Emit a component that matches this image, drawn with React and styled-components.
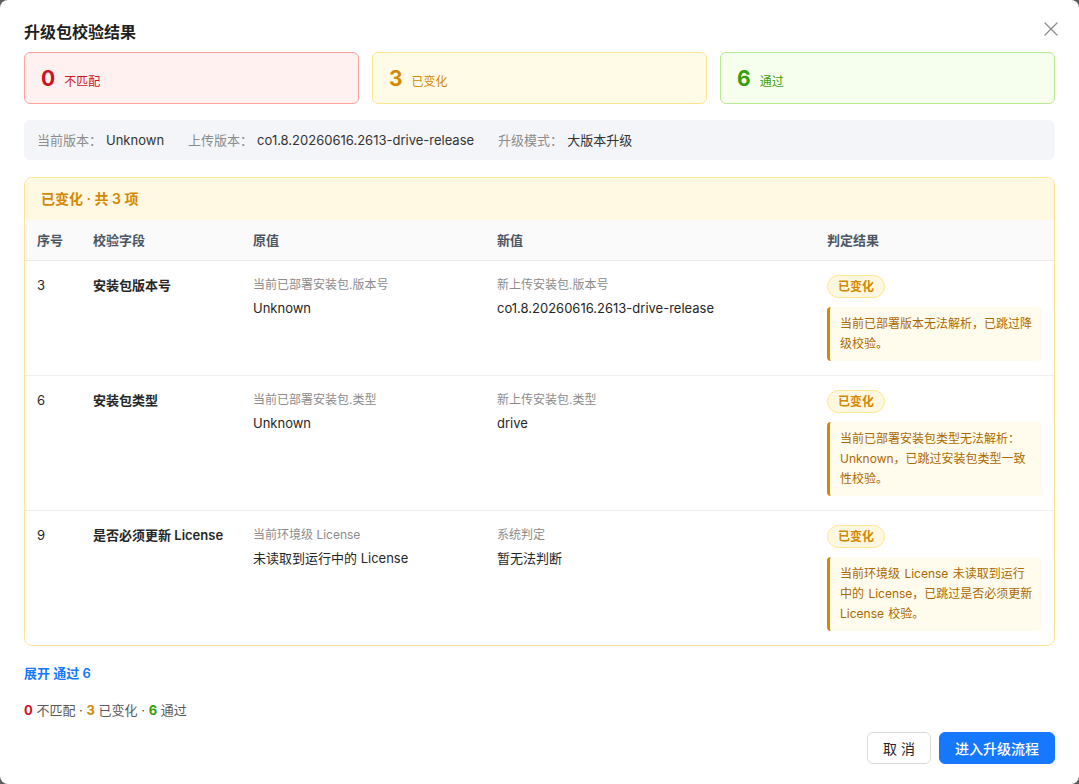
import React from "react";
import styled, { createGlobalStyle } from "styled-components";

const GlobalStyle = createGlobalStyle`
  html, body {
    margin: 0;
    padding: 0;
    background: #5c5c5c;
  }
  body {
    font-family: Inter, "Noto Sans CJK SC", "Noto Sans", sans-serif;
    color: #262626;
    -webkit-font-smoothing: antialiased;
  }
  * { box-sizing: border-box; }
`;

const Modal = styled.div`
  width: 1079px;
  height: 784px;
  background: #fff;
  border-radius: 8px;
  padding: 20px 24px 20px;
  display: flex;
  flex-direction: column;
  position: relative;
`;

const Title = styled.h2`
  margin: 0;
  font-size: 16px;
  line-height: 24px;
  font-weight: 600;
  color: #1f1f1f;
`;

const CloseBtn = styled.button`
  position: absolute;
  top: 21px;
  right: 20px;
  width: 16px;
  height: 16px;
  padding: 0;
  border: none;
  background: transparent;
  display: flex;
  align-items: center;
  justify-content: center;
`;

const StatRow = styled.div`
  display: grid;
  grid-template-columns: repeat(3, 1fr);
  gap: 13px;
  margin-top: 8px;
`;

const tones = {
  red: { bg: "#fff1f0", border: "#ffa39e", color: "#cf1322" },
  yellow: { bg: "#fffbe6", border: "#ffe58f", color: "#d48806" },
  green: { bg: "#f6ffed", border: "#b7eb8f", color: "#389e0d" },
};

const StatCard = styled.div`
  height: 52px;
  border-radius: 6px;
  border: 1px solid ${(p) => tones[p.$tone].border};
  background: ${(p) => tones[p.$tone].bg};
  color: ${(p) => tones[p.$tone].color};
  display: flex;
  align-items: baseline;
  padding: 12px 16px 0;
  gap: 9px;
`;

const StatNum = styled.span`
  font-size: 21px;
  line-height: 28px;
  font-weight: 700;
`;

const StatLabel = styled.span`
  font-size: 12px;
`;

const InfoBar = styled.div`
  margin-top: 16px;
  height: 40px;
  background: #f4f5f8;
  border-radius: 6px;
  display: flex;
  align-items: center;
  padding: 0 13px;
  gap: 24px;
  font-size: 13px;
  line-height: 20px;
`;

const InfoItem = styled.div`
  display: flex;
  align-items: baseline;
  gap: 4px;
`;

const InfoLabel = styled.span`
  color: #8c8c8c;
`;

const InfoValue = styled.span`
  color: #333;
`;

const Section = styled.div`
  margin-top: 17px;
  border: 1px solid #ffe58f;
  border-radius: 8px;
  overflow: hidden;
`;

const SectionHead = styled.div`
  background: #fff8e2;
  padding: 11px 16px;
  font-size: 14px;
  line-height: 20px;
  font-weight: 600;
  color: #d48806;
`;

const cols = "56px 160px 244px 330px 1fr";

const HeadRow = styled.div`
  display: grid;
  grid-template-columns: ${cols};
  background: #fafafa;
  border-bottom: 1px solid #ebebeb;
`;

const HeadCell = styled.div`
  padding: 10px 12px;
  font-size: 13px;
  line-height: 20px;
  font-weight: 600;
  color: #4b5563;
`;

const Row = styled.div`
  display: grid;
  grid-template-columns: ${cols};
  border-top: ${(p) => (p.$first ? "none" : "1px solid #f0f0f0")};
`;

const Cell = styled.div`
  padding: 14px 12px 14px;
  font-size: 13px;
  line-height: 20px;
  color: #262626;
  font-weight: ${(p) => (p.$bold ? 600 : 400)};
`;

const SubLabel = styled.div`
  font-size: 12px;
  line-height: 20px;
  color: #8c8c8c;
`;

const Value = styled.div`
  margin-top: 3px;
  font-size: 13px;
  line-height: 20px;
  color: #262626;
`;

const Tag = styled.span`
  display: inline-flex;
  align-items: center;
  height: 23px;
  padding: 0 10px;
  border-radius: 12px;
  border: 1px solid #ffe58f;
  background: #fff8e1;
  color: #d48806;
  font-size: 12px;
  font-weight: 600;
`;

const Note = styled.div`
  margin-top: 9px;
  background: #fffcee;
  border-left: 3px solid #d48806;
  border-radius: 4px;
  padding: 7px 7px 7px 10px;
  font-size: 12px;
  line-height: 20px;
  word-spacing: 1px;
  color: #ad6800;
`;

const ExpandLink = styled.a`
  margin-top: 17px;
  font-size: 13px;
  line-height: 20px;
  font-weight: 600;
  color: #1677ff;
  cursor: pointer;
`;

const Summary = styled.div`
  margin-top: 17px;
  font-size: 13px;
  line-height: 20px;
  color: #595959;
`;

const Count = styled.b`
  color: ${(p) => tones[p.$tone].color};
  font-weight: 700;
`;

const Footer = styled.div`
  margin-top: auto;
  display: flex;
  justify-content: flex-end;
  gap: 8px;
`;

const Button = styled.button`
  height: 32px;
  padding: 0 15px;
  border-radius: 6px;
  font-family: inherit;
  font-size: 14px;
  border: 1px solid ${(p) => (p.$primary ? "#1677ff" : "#d9d9d9")};
  background: ${(p) => (p.$primary ? "#1677ff" : "#fff")};
  color: ${(p) => (p.$primary ? "#fff" : "#262626")};
  font-weight: ${(p) => (p.$primary ? 500 : 400)};
  cursor: pointer;
`;

const rows = [
  {
    no: 3,
    field: "安装包版本号",
    oldLabel: "当前已部署安装包.版本号",
    oldVal: "Unknown",
    newLabel: "新上传安装包.版本号",
    newVal: "co1.8.20260616.2613-drive-release",
    note: "当前已部署版本无法解析，已跳过降级校验。",
  },
  {
    no: 6,
    field: "安装包类型",
    oldLabel: "当前已部署安装包.类型",
    oldVal: "Unknown",
    newLabel: "新上传安装包.类型",
    newVal: "drive",
    note: "当前已部署安装包类型无法解析：Unknown，已跳过安装包类型一致性校验。",
  },
  {
    no: 9,
    field: "是否必须更新 License",
    oldLabel: "当前环境级 License",
    oldVal: "未读取到运行中的 License",
    newLabel: "系统判定",
    newVal: "暂无法判断",
    note: "当前环境级 License 未读取到运行中的 License，已跳过是否必须更新 License 校验。",
  },
];

export default function App() {
  return (
    <>
      <GlobalStyle />
      <Modal>
        <Title>升级包校验结果</Title>
        <CloseBtn aria-label="close">
          <svg width="14" height="14" viewBox="0 0 14 14">
            <path d="M1 1L13 13M13 1L1 13" stroke="#8c8c8c" strokeWidth="1.3" strokeLinecap="round" />
          </svg>
        </CloseBtn>
        <StatRow>
          <StatCard $tone="red">
            <StatNum>0</StatNum>
            <StatLabel>不匹配</StatLabel>
          </StatCard>
          <StatCard $tone="yellow">
            <StatNum>3</StatNum>
            <StatLabel>已变化</StatLabel>
          </StatCard>
          <StatCard $tone="green">
            <StatNum>6</StatNum>
            <StatLabel>通过</StatLabel>
          </StatCard>
        </StatRow>
        <InfoBar>
          <InfoItem>
            <InfoLabel>当前版本：</InfoLabel>
            <InfoValue>Unknown</InfoValue>
          </InfoItem>
          <InfoItem>
            <InfoLabel>上传版本：</InfoLabel>
            <InfoValue>co1.8.20260616.2613-drive-release</InfoValue>
          </InfoItem>
          <InfoItem>
            <InfoLabel>升级模式：</InfoLabel>
            <InfoValue>大版本升级</InfoValue>
          </InfoItem>
        </InfoBar>
        <Section>
          <SectionHead>已变化 · 共 3 项</SectionHead>
          <HeadRow>
            <HeadCell>序号</HeadCell>
            <HeadCell>校验字段</HeadCell>
            <HeadCell>原值</HeadCell>
            <HeadCell>新值</HeadCell>
            <HeadCell>判定结果</HeadCell>
          </HeadRow>
          {rows.map((r, i) => (
            <Row key={r.no} $first={i === 0}>
              <Cell>{r.no}</Cell>
              <Cell $bold>{r.field}</Cell>
              <Cell>
                <SubLabel>{r.oldLabel}</SubLabel>
                <Value>{r.oldVal}</Value>
              </Cell>
              <Cell>
                <SubLabel>{r.newLabel}</SubLabel>
                <Value>{r.newVal}</Value>
              </Cell>
              <Cell>
                <Tag>已变化</Tag>
                <Note>{r.note}</Note>
              </Cell>
            </Row>
          ))}
        </Section>
        <ExpandLink>展开 通过 6</ExpandLink>
        <Summary>
          <Count $tone="red">0</Count> 不匹配 · <Count $tone="yellow">3</Count> 已变化 ·{" "}
          <Count $tone="green">6</Count> 通过
        </Summary>
        <Footer>
          <Button>取 消</Button>
          <Button $primary>进入升级流程</Button>
        </Footer>
      </Modal>
    </>
  );
}
